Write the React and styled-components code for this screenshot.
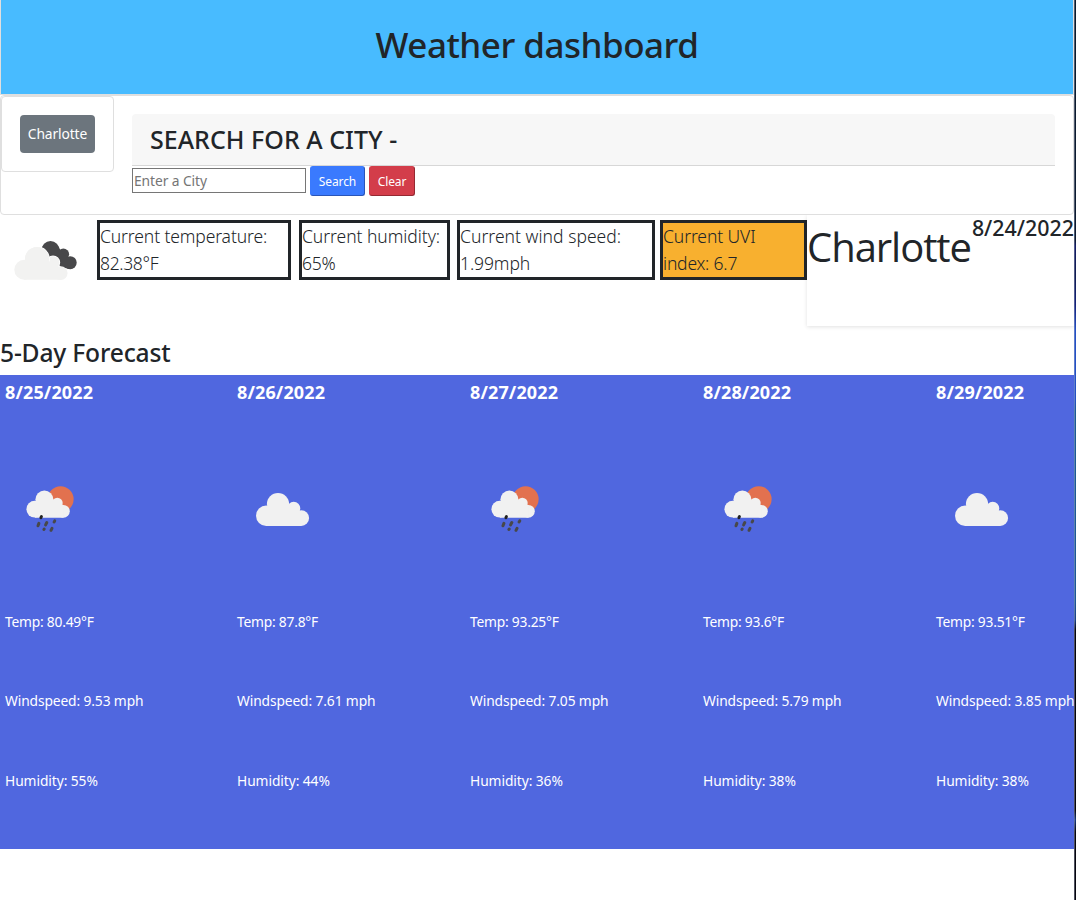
import React from 'react';
import styled, { createGlobalStyle } from 'styled-components';

const GlobalStyle = createGlobalStyle`
  *, *::before, *::after { box-sizing: border-box; }
  body {
    margin: 0;
    background: #fff;
    color: #212529;
    font-family: "Noto Sans", "Open Sans", sans-serif;
    font-size: 13.8px;
    line-height: 1.5;
  }
  h1, h2, h3, h4, p { margin: 0; }
`;

const Screen = styled.div`
  display: flex;
  height: 900px;
  overflow: hidden;
`;

const Page = styled.main`
  display: flex;
  flex-direction: column;
  width: 1074px;
  min-width: 0;
`;

const Edge = styled.div`
  flex: 1;
  border-left: 1px solid rgba(190, 196, 214, 0.4);
  background: linear-gradient(
    #0b1a2c 0, #0c1a30 240px, #141d66 246px, #101c50 275px, #14227a 305px,
    #2450c4 330px, #2450c4 400px, #1c5a94 412px, #1d5797 600px, #1a3f86 620px,
    #05050f 630px, #05050f 810px, #17367c 820px, #05050f 832px, #05050f 900px
  );
`;

const Header = styled.header`
  display: flex;
  justify-content: center;
  height: 95px;
  padding-top: 19px;
  border: 1px solid #dfdfdf;
  border-top: 0;
  background: #48bbff;
`;

const Title = styled.h1`
  font-size: 35px;
  font-weight: 500;
  line-height: 52px;
  letter-spacing: ${(p) => p.$track}px;
`;

const SearchCard = styled.section`
  display: flex;
  align-items: flex-start;
  gap: 18px;
  height: 120px;
  padding-right: 18px;
  border: 1px solid #dfdfdf;
  border-radius: 4px;
`;

const HistoryCard = styled.div`
  width: 113px;
  height: 76px;
  padding: 18px;
  border: 1px solid #dfdfdf;
  border-radius: 4px;
`;

const HistoryButton = styled.button`
  width: 75px;
  height: 38px;
  padding: 0;
  border: 0;
  border-radius: 4px;
  background: #6c757d;
  color: #fff;
  font: inherit;
  letter-spacing: -0.12px;
`;

const SearchBody = styled.div`
  flex: 1;
  padding-top: 18px;
`;

const SearchHeading = styled.h3`
  height: 52px;
  padding: 8px 18px;
  border-bottom: 1px solid #d7d7d7;
  border-radius: 4px 4px 0 0;
  background: #f7f7f7;
  font-size: 25px;
  font-weight: 500;
  line-height: 34px;
  letter-spacing: 0.02px;
`;

const SearchForm = styled.div`
  display: flex;
  align-items: flex-start;
  gap: 4px;
  height: 30px;
`;

const CityInput = styled.input`
  width: 174px;
  height: 25px;
  margin-top: 2px;
  padding: 0 0 0 1px;
  border: 1px solid #767676;
  font: inherit;
  letter-spacing: -0.08px;
  &::placeholder { color: #757575; }
`;

const SmallButton = styled.button`
  width: ${(p) => p.$width}px;
  height: 30px;
  padding: 1px 0 0;
  border: 1px solid ${(p) => p.$tone};
  border-right-color: ${(p) => p.$edge};
  border-bottom-color: ${(p) => p.$edge};
  border-radius: 3px;
  background: ${(p) => p.$tone};
  color: #fff;
  font: inherit;
  font-size: 12px;
  letter-spacing: -0.1px;
`;

const CurrentRow = styled.section`
  display: flex;
  align-items: flex-start;
  height: 121px;
`;

const CurrentIcon = styled.div`
  width: 97px;
  height: 90px;
`;

const Stat = styled.div`
  width: ${(p) => p.$width}px;
  height: 60px;
  margin: 5px ${(p) => p.$gap}px 0 0;
  border: 3px solid #212529;
  background: ${(p) => (p.$alert ? '#f8b02f' : 'transparent')};
  font-size: 17.5px;
  font-weight: 300;
  line-height: 27px;
`;

const Line = styled.p`
  letter-spacing: ${(p) => p.$track || 0}px;
  white-space: nowrap;
`;

const CityPanel = styled.div`
  display: flex;
  width: 267px;
  height: 111px;
  box-shadow: 0 1px 4px rgba(0, 0, 0, 0.12);
  clip-path: inset(0 0 -8px -4px);
`;

const CityName = styled.h2`
  width: 165px;
  font-family: "Open Sans", "Noto Sans", sans-serif;
  font-size: 40px;
  font-weight: 400;
  line-height: 64px;
  letter-spacing: -1.05px;
`;

const CityDate = styled.h4`
  font-size: 21.4px;
  font-weight: 500;
  line-height: 26px;
  white-space: nowrap;
`;

const ForecastTitle = styled.h3`
  height: 39px;
  font-size: 24.6px;
  font-weight: 500;
  line-height: 34px;
  letter-spacing: -0.18px;
`;

const Forecast = styled.section`
  display: grid;
  grid-template-columns: repeat(5, 233px);
  height: 474px;
  overflow: hidden;
  background: #5067df;
  color: #fff;
`;

const Day = styled.article`
  display: flex;
  flex-direction: column;
  padding: 4px 0 0 4px;
  &:first-child { padding-left: 5px; }
`;

const DayDate = styled.h4`
  font-size: 18px;
  font-weight: 700;
  line-height: 27px;
  letter-spacing: 0.12px;
`;

const DayIcon = styled.div`
  height: 90px;
  margin: 58px 0 57px;
`;

const Reading = styled(Line)`
  height: 22px;
  margin-bottom: 57.4px;
  line-height: 22px;
`;

const Glyph = styled.svg`
  display: block;
  width: 90px;
  height: 90px;
`;

function CloudIcon() {
  return (
    <Glyph viewBox="0 0 90 90" fill="#f1f1f1">
      <circle cx="29.2" cy="51.7" r="10.2" />
      <circle cx="41" cy="40" r="11.1" />
      <circle cx="56.7" cy="44.4" r="6.6" />
      <circle cx="64.3" cy="54.1" r="7.8" />
      <path d="M29 45h28l7 4v12.9H29z" />
    </Glyph>
  );
}

function RainIcon() {
  return (
    <Glyph viewBox="0 0 90 90">
      <circle cx="55.6" cy="35.2" r="13" fill="#e2714f" />
      <g fill="#f1f1f1">
        <circle cx="29.8" cy="45.2" r="8.4" />
        <circle cx="39.4" cy="35.5" r="9" />
        <circle cx="52.3" cy="39.1" r="5.4" />
        <circle cx="58.4" cy="47.3" r="6.4" />
        <path d="M30 39h22l6.4 2v12.7H30z" />
      </g>
      <g stroke="#48484a" strokeWidth="3" strokeLinecap="round">
        <path d="M36.4 52.6l-.5 1" stroke="#222" />
        <path d="M33.9 59.4l-.9 2.4M41.8 58.5l-1.2 2.4M49.7 56.9l-.6 1M39.2 65l-.3.5M47 64.3l-1 2" />
      </g>
    </Glyph>
  );
}

function BrokenCloudsIcon() {
  return (
    <Glyph viewBox="0 0 90 90">
      <g fill="#48484a">
        <circle cx="50.5" cy="35" r="9" />
        <circle cx="63.4" cy="39.3" r="5.7" />
        <circle cx="70.2" cy="47.7" r="6.5" />
        <path d="M50 30l9 3 7 9 3 12-8-2-8-8z" />
      </g>
      <g fill="#f2f2f1" stroke="#fff" strokeWidth="1.6" paintOrder="stroke">
        <circle cx="53" cy="47.6" r="6.4" />
        <circle cx="57" cy="58" r="6.2" />
        <circle cx="37" cy="44" r="12" />
      </g>
      <g fill="#f2f2f1">
        <circle cx="24.3" cy="54.8" r="10" />
        <circle cx="37" cy="44" r="12" />
        <circle cx="60.8" cy="58.1" r="6.8" />
        <path d="M24 50l29-4 8 8v10.8H24z" />
      </g>
    </Glyph>
  );
}

const stats = [
  { width: 194, gap: 8, lines: [['Current temperature:', -0.12], ['82.38°F', -0.35]] },
  { width: 151, gap: 7, lines: [['Current humidity:', -0.05], ['65%', -0.3]] },
  { width: 198, gap: 5, lines: [['Current wind speed:', 0.03], ['1.99mph', -0.1]] },
  { width: 147, gap: 0, alert: true, lines: [['Current UVI', -0.1], ['index: 6.7', -0.2]] },
];

const days = [
  { date: '8/25/2022', rain: true, temp: '80.49', wind: '9.53', humidity: 55 },
  { date: '8/26/2022', rain: false, temp: '87.8', wind: '7.61', humidity: 44 },
  { date: '8/27/2022', rain: true, temp: '93.25', wind: '7.05', humidity: 36 },
  { date: '8/28/2022', rain: true, temp: '93.6', wind: '5.79', humidity: 38 },
  { date: '8/29/2022', rain: false, temp: '93.51', wind: '3.85', humidity: 38 },
];

export default function App() {
  return (
    <Screen>
      <GlobalStyle />
      <Page>
        <Header>
          <Title $track={-0.5}>Weather dashboard</Title>
        </Header>
        <SearchCard>
          <HistoryCard>
            <HistoryButton>Charlotte</HistoryButton>
          </HistoryCard>
          <SearchBody>
            <SearchHeading>SEARCH FOR A CITY -</SearchHeading>
            <SearchForm>
              <CityInput placeholder="Enter a City" />
              <SmallButton $width={55} $tone="#3a7afe" $edge="#2a55b8">Search</SmallButton>
              <SmallButton $width={46} $tone="#d33d4a" $edge="#952932">Clear</SmallButton>
            </SearchForm>
          </SearchBody>
        </SearchCard>
        <CurrentRow>
          <CurrentIcon>
            <BrokenCloudsIcon />
          </CurrentIcon>
          {stats.map((s) => (
            <Stat key={s.lines[0][0]} $width={s.width} $gap={s.gap} $alert={s.alert}>
              {s.lines.map(([text, track]) => (
                <Line key={text} $track={track}>{text}</Line>
              ))}
            </Stat>
          ))}
          <CityPanel>
            <CityName>Charlotte</CityName>
            <CityDate>8/24/2022</CityDate>
          </CityPanel>
        </CurrentRow>
        <ForecastTitle>5-Day Forecast</ForecastTitle>
        <Forecast>
          {days.map((d) => (
            <Day key={d.date}>
              <DayDate>{d.date}</DayDate>
              <DayIcon>{d.rain ? <RainIcon /> : <CloudIcon />}</DayIcon>
              <Reading $track={-0.22}>{`Temp: ${d.temp}°F`}</Reading>
              <Reading $track={-0.12}>{`Windspeed: ${d.wind} mph`}</Reading>
              <Reading $track={-0.08}>{`Humidity: ${d.humidity}%`}</Reading>
            </Day>
          ))}
        </Forecast>
      </Page>
      <Edge />
    </Screen>
  );
}
